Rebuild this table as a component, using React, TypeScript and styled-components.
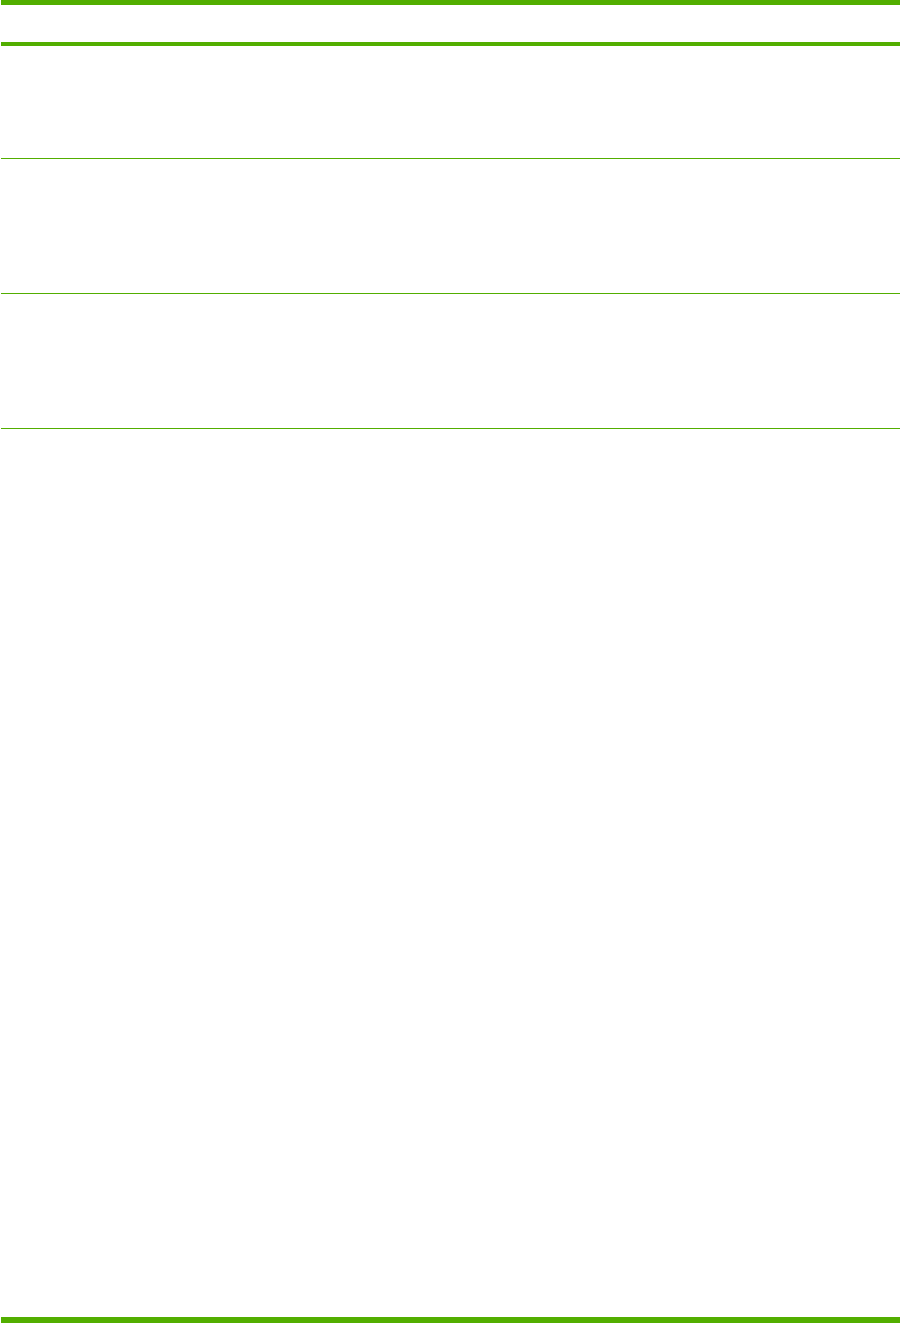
import styled, { createGlobalStyle } from "styled-components";

const GREEN = "#52ae00";

const Global = createGlobalStyle`
  html, body {
    margin: 0;
    padding: 0;
    background: #ffffff;
    font-family: "Liberation Sans", Arial, sans-serif;
  }
`;

const Page = styled.div`
  width: 899px;
  height: 1323px;
  margin-left: 1px;
  display: flex;
  flex-direction: column;
  overflow: hidden;
`;

const Table = styled.div`
  display: flex;
  flex-direction: column;
  border-top: 5px solid ${GREEN};
`;

const HeaderRow = styled.div`
  height: 37px;
  border-bottom: 4px solid ${GREEN};
`;

const Row = styled.div<{ $h: number }>`
  height: ${(p) => p.$h}px;
  border-bottom: 1px solid ${GREEN};
`;

const Spacer = styled.div`
  flex: 1;
`;

const Footer = styled.div`
  height: 6px;
  background: ${GREEN};
`;

export default function App() {
  return (
    <>
      <Global />
      <Page>
        <Table>
          <HeaderRow />
          <Row $h={112} />
          <Row $h={134} />
          <Row $h={134} />
        </Table>
        <Spacer />
        <Footer />
      </Page>
    </>
  );
}
